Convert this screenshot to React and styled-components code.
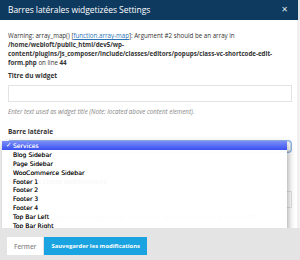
import React from "react";
import styled, { createGlobalStyle } from "styled-components";

const Global = createGlobalStyle`
  html, body { margin: 0; padding: 0; }
  body {
    background: #e4e4e4;
    font-family: "Open Sans", "Liberation Sans", sans-serif;
    width: 300px;
    height: 260px;
    overflow: hidden;
  }
`;

const Modal = styled.div`
  width: 300px;
  height: 260px;
  display: flex;
  flex-direction: column;
  background: #e4e4e4;
`;

const Header = styled.div`
  height: 20px;
  background: #0f3a5f;
  display: flex;
  align-items: center;
  justify-content: space-between;
  padding: 0 8px 0 8px;
  width: 298px;
  box-sizing: border-box;
`;

const Title = styled.div`
  color: #fff;
  font-size: 8.5px;
  line-height: 20px;
  letter-spacing: -0.05px;
`;

const Close = styled.div`
  color: #dfe6ee;
  font-size: 8px;
  font-weight: 700;
  font-family: "DejaVu Sans", sans-serif;
  line-height: 1;
  margin-right: 2px;
`;

const BodyWrap = styled.div`
  display: flex;
  height: 208px;
`;

const Body = styled.div`
  width: 297px;
  background: #fff;
  padding: 11px 6px 0 8px;
  box-sizing: border-box;
  overflow: hidden;
`;

const Track = styled.div`
  width: 3px;
  background: #f1f1f1;
`;

const Warning = styled.p`
  margin: 0 0 4px;
  font-size: 6.2px;
  line-height: 9px;
  color: #333;
  white-space: nowrap;
  b { font-weight: 700; }
  a { color: #2c74b5; text-decoration: underline; }
`;

const Field = styled.div`
  margin-bottom: ${(p) => p.$gap || 11}px;
  position: relative;
`;

const Label = styled.div`
  font-size: 6.5px;
  font-weight: 700;
  line-height: 9px;
  color: #333;
  margin-bottom: ${(p) => p.$mb || 5}px;
`;

const Input = styled.div`
  height: 17px;
  border: 1px solid #e3e3e3;
  box-sizing: border-box;
  width: 284px;
  background: #fff;
`;

const Help = styled.div`
  margin-top: 5px;
  font-size: 6.2px;
  line-height: 9px;
  font-style: italic;
  color: #858585;
  white-space: nowrap;
`;

const Select = styled.div`
  height: 11px;
  width: 283px;
  border: 1px solid #cfd9e6;
  border-radius: 3px;
  box-sizing: border-box;
  box-shadow: 0 0 0 1px #8fb4e8;
  background: #fff;
`;

const Menu = styled.div`
  position: absolute;
  top: 14px;
  left: -6px;
  width: 285px;
  padding-bottom: 2px;
  background: rgba(255, 255, 255, 0.965);
  box-shadow: 1px 3px 7px rgba(0, 0, 0, 0.38);
  z-index: 2;
`;

const Option = styled.div`
  height: 8.9px;
  display: flex;
  align-items: center;
  font-family: "DejaVu Sans", sans-serif;
  font-size: 6.1px;
  color: ${(p) => (p.$active ? "#fff" : "#000")};
  text-shadow: 0 0 0.2px ${(p) => (p.$active ? "rgba(255,255,255,0.6)" : "rgba(0,0,0,0.6)")};
  background: ${(p) =>
    p.$active ? "linear-gradient(#7b8ff8, #3a50f1)" : "transparent"};
  padding-left: 11px;
  position: relative;
  white-space: nowrap;
`;

const Check = styled.span`
  position: absolute;
  left: 4px;
  font-size: 6.4px;
`;

const Footer = styled.div`
  flex: 1;
  display: flex;
  align-items: flex-start;
  padding: 9px 0 0 7px;
  gap: 1px;
`;

const Button = styled.div`
  height: 18px;
  display: flex;
  align-items: center;
  padding: 0 7px;
  font-size: ${(p) => (p.$primary ? 5.9 : 6.4)}px;
  font-weight: ${(p) => (p.$primary ? 700 : 600)};
  color: ${(p) => (p.$primary ? "#fff" : "#8a8a8a")};
  background: ${(p) => (p.$primary ? "#1aa3e1" : "#fff")};
`;

const options = [
  "Services",
  "Blog Sidebar",
  "Page Sidebar",
  "WooCommerce Sidebar",
  "Footer 1",
  "Footer 2",
  "Footer 3",
  "Footer 4",
  "Top Bar Left",
  "Top Bar Right",
];

export default function App() {
  return (
    <>
      <Global />
      <Modal>
        <Header>
          <Title>Barres latérales widgetizées Settings</Title>
          <Close>✕</Close>
        </Header>
        <BodyWrap>
          <Body>
            <Warning>
              Warning: array_map() [<a>function.array-map</a>]: Argument #2 should be an array in
              <br />
              <b>/home/webloft/public_html/dev5/wp-</b>
              <br />
              <b>content/plugins/js_composer/include/classes/editors/popups/class-vc-shortcode-edit-</b>
              <br />
              <b>form.php</b> on line <b>44</b>
            </Warning>
            <Field>
              <Label>Titre du widget</Label>
              <Input />
              <Help>Enter text used as widget title (Note: located above content element).</Help>
            </Field>
            <Field $gap={25}>
              <Label $mb={5}>Barre latérale</Label>
              <Select />
              <Menu>
                {options.map((o, i) => (
                  <Option key={o} $active={i === 0}>
                    {i === 0 && <Check>✓</Check>}
                    {o}
                  </Option>
                ))}
              </Menu>
            </Field>
            <Field>
              <Label>Nom de la classe additionnelle</Label>
              <Input />
              <Help>Style particular content element differently - add a class name and refer to it in custom CSS.</Help>
            </Field>
          </Body>
          <Track />
        </BodyWrap>
        <Footer>
          <Button>Fermer</Button>
          <Button $primary>Sauvegarder les modifications</Button>
        </Footer>
      </Modal>
    </>
  );
}
